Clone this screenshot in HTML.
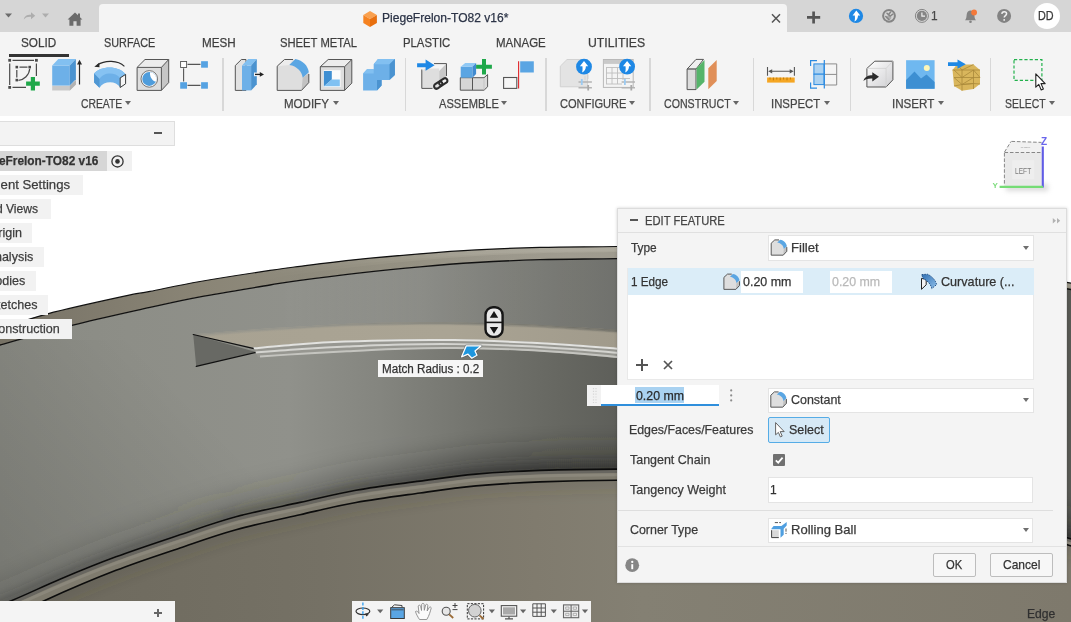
<!DOCTYPE html>
<html lang="en">
<head>
<meta charset="utf-8">
<title>PiegeFrelon-TO82 v16</title>
<style>
*{box-sizing:border-box;margin:0;padding:0}
html,body{width:1071px;height:622px;overflow:hidden;background:#fff}
body{position:relative;font-family:"Liberation Sans",sans-serif;font-size:13px;color:#3c3c3c}
.abs{position:absolute}
#model{position:absolute;left:0;top:0}
#titlebar{position:absolute;left:0;top:0;width:1071px;height:32px;background:#d6d6d6}
#doctab{position:absolute;left:99px;top:4px;width:688px;height:28px;background:#f4f4f4;border-radius:4px 4px 0 0}
#toolbar{position:absolute;left:0;top:32px;width:1071px;height:84px;background:#f4f4f4}
.t{position:absolute;white-space:nowrap;line-height:1;transform-origin:0 50%;-webkit-text-stroke:0.25px currentColor}
.tab{font-size:12.3px;color:#3a3a3a;top:37px}
.grp{font-size:12.3px;color:#444;top:98px}
.sep{position:absolute;top:58px;width:1.6px;height:53px;background:#d8d8d8}
.lbl{position:absolute;left:0;height:20px;background:#f2f2f2;font-size:13.4px;color:#3c3c3c;line-height:20px;white-space:nowrap;overflow:hidden}
#panel{position:absolute;left:617px;top:208px;width:450px;height:375px;background:#f4f4f4;border:1px solid #dcdcdc;box-shadow:0 0 3px rgba(0,0,0,.18)}
.field{position:absolute;background:#fff;border:1px solid #e4e4e4;height:26px}
.pl{position:absolute;font-size:13.4px;color:#3c3c3c;white-space:nowrap;line-height:1}
.btn{position:absolute;height:24px;border:1px solid #bdbdbd;background:#f7f7f7;border-radius:2px;font-size:13.4px;text-align:center;line-height:22px;color:#333}
.dd{position:absolute;width:0;height:0;border-left:3.5px solid transparent;border-right:3.5px solid transparent;border-top:4px solid #666}
</style>
</head>
<body>
<svg id="model" width="1071" height="622" viewBox="0 0 1071 622">
<defs>
<linearGradient id="gw" gradientUnits="userSpaceOnUse" x1="0" y1="0" x2="1071" y2="0">
<stop offset="0" stop-color="#898a83"/><stop offset="0.12" stop-color="#8d8e87"/><stop offset="0.27" stop-color="#90918b"/><stop offset="0.355" stop-color="#84857f"/><stop offset="0.448" stop-color="#72736d"/><stop offset="0.523" stop-color="#666761"/><stop offset="0.576" stop-color="#5e5f5a"/><stop offset="1" stop-color="#585954"/>
</linearGradient>
<linearGradient id="gs" gradientUnits="userSpaceOnUse" x1="0" y1="0" x2="1071" y2="0"><stop offset="0" stop-color="#2e2e2a" stop-opacity="0.14"/><stop offset="0.3" stop-color="#2e2e2a" stop-opacity="0.26"/><stop offset="0.5" stop-color="#2a2a26" stop-opacity="0.42"/><stop offset="1" stop-color="#2a2a26" stop-opacity="0.42"/></linearGradient>
<linearGradient id="go" gradientUnits="userSpaceOnUse" x1="280" y1="0" x2="420" y2="0"><stop offset="0" stop-color="#fff" stop-opacity="0"/><stop offset="1" stop-color="#fff" stop-opacity="0.115"/></linearGradient>
<linearGradient id="grd" gradientUnits="userSpaceOnUse" x1="250" y1="0" x2="480" y2="0"><stop offset="0" stop-color="#000" stop-opacity="0"/><stop offset="1" stop-color="#000" stop-opacity="0.06"/></linearGradient>
<linearGradient id="grl" gradientUnits="userSpaceOnUse" x1="250" y1="0" x2="480" y2="0"><stop offset="0" stop-color="#fff" stop-opacity="0"/><stop offset="1" stop-color="#fff" stop-opacity="0.05"/></linearGradient>
<linearGradient id="gs2" gradientUnits="userSpaceOnUse" x1="0" y1="0" x2="1071" y2="0"><stop offset="0" stop-color="#2e2e2a" stop-opacity="0.3"/><stop offset="0.25" stop-color="#2e2e2a" stop-opacity="0.4"/><stop offset="0.5" stop-color="#2a2a26" stop-opacity="0.55"/><stop offset="1" stop-color="#2a2a26" stop-opacity="0.55"/></linearGradient>
<linearGradient id="gdl" gradientUnits="userSpaceOnUse" x1="210" y1="420" x2="20" y2="600"><stop offset="0" stop-color="#000" stop-opacity="0"/><stop offset="1" stop-color="#000" stop-opacity="0.13"/></linearGradient>
<linearGradient id="gf" gradientUnits="userSpaceOnUse" x1="0" y1="0" x2="1071" y2="0">
<stop offset="0" stop-color="#6c685c"/><stop offset="0.3" stop-color="#757165"/><stop offset="0.5" stop-color="#807b6e"/><stop offset="0.6" stop-color="#848073"/><stop offset="1" stop-color="#7e796c"/>
</linearGradient>
<linearGradient id="gr" gradientUnits="userSpaceOnUse" x1="0" y1="0" x2="1071" y2="0">
<stop offset="0" stop-color="#777265"/><stop offset="0.05" stop-color="#7c776a"/><stop offset="0.19" stop-color="#8a8576"/><stop offset="0.28" stop-color="#8f8b7d"/><stop offset="0.39" stop-color="#9c9889"/><stop offset="0.445" stop-color="#a39f92"/><stop offset="0.53" stop-color="#aaa699"/><stop offset="1" stop-color="#9d9989"/>
</linearGradient>
<linearGradient id="gl" gradientUnits="userSpaceOnUse" x1="190" y1="0" x2="620" y2="0">
<stop offset="0" stop-color="#a8a292"/><stop offset="0.6" stop-color="#aaa494"/><stop offset="1" stop-color="#a09a8b"/>
</linearGradient>
<filter id="b12" x="-10%" y="-50%" width="120%" height="200%"><feGaussianBlur stdDeviation="11"/></filter>
<filter id="b4" x="-10%" y="-50%" width="120%" height="200%"><feGaussianBlur stdDeviation="4"/></filter>
<filter id="b2" x="-10%" y="-100%" width="120%" height="300%"><feGaussianBlur stdDeviation="1.8"/></filter>
<filter id="b6" x="-10%" y="-50%" width="120%" height="200%"><feGaussianBlur stdDeviation="7"/></filter>
<clipPath id="cw"><path d="M-30.0 354.0 C-25.0 352.5 -17.0 349.8 0.0 345.0 C17.0 340.2 46.9 331.7 71.9 325.4 C96.9 319.1 128.7 312.2 150.0 307.4 C171.3 302.6 180.0 300.5 200.0 296.8 C220.0 293.1 253.3 287.8 270.0 285.0 C286.7 282.2 285.7 282.2 300.0 280.3 C314.3 278.4 336.0 275.6 356.0 273.3 C376.0 271.1 400.0 268.6 420.0 266.8 C440.0 265.0 456.0 263.7 476.0 262.5 C496.0 261.3 516.5 260.3 540.0 259.7 C563.5 259.1 580.3 259.1 617.0 258.6 C653.7 258.2 712.8 256.3 760.0 257.0 C807.2 257.7 848.7 257.7 900.0 263.0 C951.3 268.3 1034.7 283.5 1068.0 289.0 C1101.3 294.5 1094.7 294.8 1100.0 296.0 L1100 700 L-30 700 Z"/></clipPath>
<clipPath id="cf"><path d="M-30.0 636.0 C-17.5 630.1 20.5 611.4 44.8 600.4 C69.1 589.4 93.5 579.0 116.0 570.3 C138.5 561.5 160.0 554.7 180.0 547.9 C200.0 541.1 216.0 535.2 236.0 529.7 C256.0 524.2 280.0 519.2 300.0 514.7 C320.0 510.2 336.0 506.1 356.0 502.5 C376.0 498.9 400.0 495.8 420.0 493.0 C440.0 490.2 456.0 487.8 476.0 485.9 C496.0 484.0 516.5 482.8 540.0 481.9 C563.5 481.0 580.3 480.4 617.0 480.3 C653.7 480.2 712.8 477.6 760.0 481.0 C807.2 484.4 848.7 490.3 900.0 501.0 C951.3 511.7 1034.7 536.0 1068.0 545.0 C1101.3 554.0 1094.7 553.3 1100.0 555.0 L1100 700 L-30 700 Z"/></clipPath>
</defs>
<path d="M-30.0 354.0 C-25.0 352.5 -17.0 349.8 0.0 345.0 C17.0 340.2 46.9 331.7 71.9 325.4 C96.9 319.1 128.7 312.2 150.0 307.4 C171.3 302.6 180.0 300.5 200.0 296.8 C220.0 293.1 253.3 287.8 270.0 285.0 C286.7 282.2 285.7 282.2 300.0 280.3 C314.3 278.4 336.0 275.6 356.0 273.3 C376.0 271.1 400.0 268.6 420.0 266.8 C440.0 265.0 456.0 263.7 476.0 262.5 C496.0 261.3 516.5 260.3 540.0 259.7 C563.5 259.1 580.3 259.1 617.0 258.6 C653.7 258.2 712.8 256.3 760.0 257.0 C807.2 257.7 848.7 257.7 900.0 263.0 C951.3 268.3 1034.7 283.5 1068.0 289.0 C1101.3 294.5 1094.7 294.8 1100.0 296.0 L1100 640 L-30 640 Z" fill="url(#gw)"/>
<rect x="0" y="340" width="330" height="282" fill="url(#gdl)" clip-path="url(#cw)"/>
<g clip-path="url(#cw)"><path d="M-30.0 610.0 C-23.0 607.4 -3.0 600.5 12.0 594.4 C27.0 588.3 42.7 580.5 60.0 573.2 C77.3 565.9 96.0 558.2 116.0 550.8 C136.0 543.4 160.0 535.5 180.0 528.8 C200.0 522.1 216.0 516.2 236.0 510.8 C256.0 505.4 280.0 500.8 300.0 496.4 C320.0 492.0 336.0 487.8 356.0 484.2 C376.0 480.6 400.0 477.8 420.0 475.1 C440.0 472.4 456.0 469.9 476.0 468.1 C496.0 466.3 516.5 465.2 540.0 464.4 C563.5 463.6 580.3 463.2 617.0 463.1 C653.7 463.0 712.8 460.2 760.0 464.0 C807.2 467.8 848.7 474.7 900.0 486.0 C951.3 497.3 1034.7 522.7 1068.0 532.0 C1101.3 541.3 1094.7 540.3 1100.0 542.0" fill="none" stroke="url(#gs)" stroke-width="32" filter="url(#b12)"/><path d="M-30.0 615.0 C-23.0 612.4 -3.0 605.5 12.0 599.4 C27.0 593.3 42.7 585.5 60.0 578.2 C77.3 570.9 96.0 563.2 116.0 555.8 C136.0 548.4 160.0 540.5 180.0 533.8 C200.0 527.1 216.0 521.2 236.0 515.8 C256.0 510.4 280.0 505.8 300.0 501.4 C320.0 497.0 336.0 492.8 356.0 489.2 C376.0 485.6 400.0 482.8 420.0 480.1 C440.0 477.4 456.0 474.9 476.0 473.1 C496.0 471.3 516.5 470.2 540.0 469.4 C563.5 468.6 580.3 468.2 617.0 468.1 C653.7 468.0 712.8 465.2 760.0 469.0 C807.2 472.8 848.7 479.7 900.0 491.0 C951.3 502.3 1034.7 527.7 1068.0 537.0 C1101.3 546.3 1094.7 545.3 1100.0 547.0" fill="none" stroke="url(#gs2)" stroke-width="12" filter="url(#b4)"/></g>
<path d="M193.2 334.5 C202.7 333.7 232.2 331.1 250.0 329.8 C267.8 328.5 284.2 327.6 300.0 326.6 C315.8 325.6 328.3 324.6 345.0 323.9 C361.7 323.2 381.8 322.9 400.0 322.6 C418.2 322.4 434.0 322.2 454.0 322.4 C474.0 322.6 499.0 323.1 520.0 324.0 C541.0 324.9 563.8 326.5 580.0 327.5 C596.2 328.5 600.3 328.6 617.0 330.0 C633.7 331.4 669.5 335.0 680.0 336.0 L680 336 L680 250 L193 250 Z" fill="url(#go)" clip-path="url(#cw)"/>
<path d="M-30.0 339.0 C-25.0 337.3 -12.9 333.2 0.0 329.0 C12.9 324.8 27.1 319.2 47.6 313.8 C68.1 308.4 106.1 300.1 123.2 296.4 C140.3 292.7 137.2 293.9 150.0 291.4 C162.8 288.9 180.0 285.0 200.0 281.5 C220.0 278.0 253.3 272.9 270.0 270.4 C286.7 267.9 285.7 268.1 300.0 266.3 C314.3 264.5 336.0 261.7 356.0 259.6 C376.0 257.5 400.0 255.4 420.0 253.8 C440.0 252.2 456.0 251.0 476.0 249.9 C496.0 248.8 516.5 248.0 540.0 247.4 C563.5 246.8 580.3 246.9 617.0 246.5 C653.7 246.1 712.8 244.1 760.0 245.0 C807.2 245.9 848.7 245.7 900.0 252.0 C951.3 258.3 1034.7 276.3 1068.0 282.6 C1101.3 288.9 1094.7 288.8 1100.0 290.0 L1100.0 296.0 C1094.7 294.8 1101.3 294.5 1068.0 289.0 C1034.7 283.5 951.3 268.3 900.0 263.0 C848.7 257.7 807.2 257.7 760.0 257.0 C712.8 256.3 653.7 258.2 617.0 258.6 C580.3 259.1 563.5 259.1 540.0 259.7 C516.5 260.3 496.0 261.3 476.0 262.5 C456.0 263.7 440.0 265.0 420.0 266.8 C400.0 268.6 376.0 271.1 356.0 273.3 C336.0 275.6 314.3 278.4 300.0 280.3 C285.7 282.2 286.7 282.2 270.0 285.0 C253.3 287.8 220.0 293.1 200.0 296.8 C180.0 300.5 171.3 302.6 150.0 307.4 C128.7 312.2 96.9 319.1 71.9 325.4 C46.9 331.7 17.0 340.2 0.0 345.0 C-17.0 349.8 -25.0 352.5 -30.0 354.0 Z" fill="url(#gr)"/>
<path d="M-30.0 347.5 C-25.0 346.0 -17.0 343.3 0.0 338.5 C17.0 333.7 46.9 325.2 71.9 318.9 C96.9 312.6 128.7 305.7 150.0 300.9 C171.3 296.1 180.0 294.0 200.0 290.3 C220.0 286.6 253.3 281.2 270.0 278.5 C286.7 275.8 285.7 275.8 300.0 273.8 C314.3 271.9 336.0 269.1 356.0 266.8 C376.0 264.6 400.0 262.1 420.0 260.3 C440.0 258.5 456.0 257.2 476.0 256.0 C496.0 254.8 516.5 253.8 540.0 253.2 C563.5 252.5 580.3 252.6 617.0 252.1 C653.7 251.7 712.8 249.8 760.0 250.5 C807.2 251.2 848.7 251.2 900.0 256.5 C951.3 261.8 1034.7 277.0 1068.0 282.5 C1101.3 288.0 1094.7 288.3 1100.0 289.5 L1100.0 296.0 C1094.7 294.8 1101.3 294.5 1068.0 289.0 C1034.7 283.5 951.3 268.3 900.0 263.0 C848.7 257.7 807.2 257.7 760.0 257.0 C712.8 256.3 653.7 258.2 617.0 258.6 C580.3 259.1 563.5 259.1 540.0 259.7 C516.5 260.3 496.0 261.3 476.0 262.5 C456.0 263.7 440.0 265.0 420.0 266.8 C400.0 268.6 376.0 271.1 356.0 273.3 C336.0 275.6 314.3 278.4 300.0 280.3 C285.7 282.2 286.7 282.2 270.0 285.0 C253.3 287.8 220.0 293.1 200.0 296.8 C180.0 300.5 171.3 302.6 150.0 307.4 C128.7 312.2 96.9 319.1 71.9 325.4 C46.9 331.7 17.0 340.2 0.0 345.0 C-17.0 349.8 -25.0 352.5 -30.0 354.0 Z" fill="url(#grd)"/>
<path d="M-30.0 339.0 C-25.0 337.3 -12.9 333.2 0.0 329.0 C12.9 324.8 27.1 319.2 47.6 313.8 C68.1 308.4 106.1 300.1 123.2 296.4 C140.3 292.7 137.2 293.9 150.0 291.4 C162.8 288.9 180.0 285.0 200.0 281.5 C220.0 278.0 253.3 272.9 270.0 270.4 C286.7 267.9 285.7 268.1 300.0 266.3 C314.3 264.5 336.0 261.7 356.0 259.6 C376.0 257.5 400.0 255.4 420.0 253.8 C440.0 252.2 456.0 251.0 476.0 249.9 C496.0 248.8 516.5 248.0 540.0 247.4 C563.5 246.8 580.3 246.9 617.0 246.5 C653.7 246.1 712.8 244.1 760.0 245.0 C807.2 245.9 848.7 245.7 900.0 252.0 C951.3 258.3 1034.7 276.3 1068.0 282.6 C1101.3 288.9 1094.7 288.8 1100.0 290.0 L1100.0 294.5 C1094.7 293.3 1101.3 293.4 1068.0 287.1 C1034.7 280.8 951.3 262.8 900.0 256.5 C848.7 250.2 807.2 250.4 760.0 249.5 C712.8 248.6 653.7 250.6 617.0 251.0 C580.3 251.4 563.5 251.3 540.0 251.9 C516.5 252.5 496.0 253.3 476.0 254.4 C456.0 255.5 440.0 256.7 420.0 258.3 C400.0 259.9 376.0 262.0 356.0 264.1 C336.0 266.2 314.3 269.0 300.0 270.8 C285.7 272.6 286.7 272.4 270.0 274.9 C253.3 277.4 220.0 282.5 200.0 286.0 C180.0 289.5 162.8 293.4 150.0 295.9 C137.2 298.4 140.3 297.2 123.2 300.9 C106.1 304.6 68.1 312.9 47.6 318.3 C27.1 323.7 12.9 329.3 0.0 333.5 C-12.9 337.7 -25.0 341.8 -30.0 343.5 Z" fill="url(#grl)"/>
<path d="M-30.0 339.0 C-25.0 337.3 -12.9 333.2 0.0 329.0 C12.9 324.8 27.1 319.2 47.6 313.8 C68.1 308.4 106.1 300.1 123.2 296.4 C140.3 292.7 137.2 293.9 150.0 291.4 C162.8 288.9 180.0 285.0 200.0 281.5 C220.0 278.0 253.3 272.9 270.0 270.4 C286.7 267.9 285.7 268.1 300.0 266.3 C314.3 264.5 336.0 261.7 356.0 259.6 C376.0 257.5 400.0 255.4 420.0 253.8 C440.0 252.2 456.0 251.0 476.0 249.9 C496.0 248.8 516.5 248.0 540.0 247.4 C563.5 246.8 580.3 246.9 617.0 246.5 C653.7 246.1 712.8 244.1 760.0 245.0 C807.2 245.9 848.7 245.7 900.0 252.0 C951.3 258.3 1034.7 276.3 1068.0 282.6 C1101.3 288.9 1094.7 288.8 1100.0 290.0" fill="none" stroke="#111" stroke-width="1.2"/>
<path d="M-30.0 354.0 C-25.0 352.5 -17.0 349.8 0.0 345.0 C17.0 340.2 46.9 331.7 71.9 325.4 C96.9 319.1 128.7 312.2 150.0 307.4 C171.3 302.6 180.0 300.5 200.0 296.8 C220.0 293.1 253.3 287.8 270.0 285.0 C286.7 282.2 285.7 282.2 300.0 280.3 C314.3 278.4 336.0 275.6 356.0 273.3 C376.0 271.1 400.0 268.6 420.0 266.8 C440.0 265.0 456.0 263.7 476.0 262.5 C496.0 261.3 516.5 260.3 540.0 259.7 C563.5 259.1 580.3 259.1 617.0 258.6 C653.7 258.2 712.8 256.3 760.0 257.0 C807.2 257.7 848.7 257.7 900.0 263.0 C951.3 268.3 1034.7 283.5 1068.0 289.0 C1101.3 294.5 1094.7 294.8 1100.0 296.0" fill="none" stroke="#111" stroke-width="1.3"/>
<path d="M-30.0 636.0 C-17.5 630.1 20.5 611.4 44.8 600.4 C69.1 589.4 93.5 579.0 116.0 570.3 C138.5 561.5 160.0 554.7 180.0 547.9 C200.0 541.1 216.0 535.2 236.0 529.7 C256.0 524.2 280.0 519.2 300.0 514.7 C320.0 510.2 336.0 506.1 356.0 502.5 C376.0 498.9 400.0 495.8 420.0 493.0 C440.0 490.2 456.0 487.8 476.0 485.9 C496.0 484.0 516.5 482.8 540.0 481.9 C563.5 481.0 580.3 480.4 617.0 480.3 C653.7 480.2 712.8 477.6 760.0 481.0 C807.2 484.4 848.7 490.3 900.0 501.0 C951.3 511.7 1034.7 536.0 1068.0 545.0 C1101.3 554.0 1094.7 553.3 1100.0 555.0 L1100 640 L-30 640 Z" fill="url(#gf)"/>
<g clip-path="url(#cf)"><path d="M-30.0 638.0 C-17.5 632.1 20.5 613.4 44.8 602.4 C69.1 591.4 93.5 581.0 116.0 572.3 C138.5 563.5 160.0 556.7 180.0 549.9 C200.0 543.1 216.0 537.2 236.0 531.7 C256.0 526.2 280.0 521.2 300.0 516.7 C320.0 512.2 336.0 508.1 356.0 504.5 C376.0 500.9 400.0 497.8 420.0 495.0 C440.0 492.2 456.0 489.8 476.0 487.9 C496.0 486.0 516.5 484.8 540.0 483.9 C563.5 483.0 580.3 482.4 617.0 482.3 C653.7 482.2 712.8 479.6 760.0 483.0 C807.2 486.4 848.7 492.3 900.0 503.0 C951.3 513.7 1034.7 538.0 1068.0 547.0 C1101.3 556.0 1094.7 555.3 1100.0 557.0" fill="none" stroke="#3a372f" stroke-opacity="0.16" stroke-width="14" filter="url(#b6)"/></g>
<path d="M-30.0 616.0 C-23.0 613.4 -3.0 606.5 12.0 600.4 C27.0 594.3 42.7 586.5 60.0 579.2 C77.3 571.9 96.0 564.2 116.0 556.8 C136.0 549.4 160.0 541.5 180.0 534.8 C200.0 528.1 216.0 522.2 236.0 516.8 C256.0 511.4 280.0 506.8 300.0 502.4 C320.0 498.0 336.0 493.8 356.0 490.2 C376.0 486.6 400.0 483.8 420.0 481.1 C440.0 478.4 456.0 475.9 476.0 474.1 C496.0 472.3 516.5 471.2 540.0 470.4 C563.5 469.6 580.3 469.2 617.0 469.1 C653.7 469.0 712.8 466.2 760.0 470.0 C807.2 473.8 848.7 480.7 900.0 492.0 C951.3 503.3 1034.7 528.7 1068.0 538.0 C1101.3 547.3 1094.7 546.3 1100.0 548.0 L1100.0 555.0 C1094.7 553.3 1101.3 554.0 1068.0 545.0 C1034.7 536.0 951.3 511.7 900.0 501.0 C848.7 490.3 807.2 484.4 760.0 481.0 C712.8 477.6 653.7 480.2 617.0 480.3 C580.3 480.4 563.5 481.0 540.0 481.9 C516.5 482.8 496.0 484.0 476.0 485.9 C456.0 487.8 440.0 490.2 420.0 493.0 C400.0 495.8 376.0 498.9 356.0 502.5 C336.0 506.1 320.0 510.2 300.0 514.7 C280.0 519.2 256.0 524.2 236.0 529.7 C216.0 535.2 200.0 541.1 180.0 547.9 C160.0 554.7 138.5 561.5 116.0 570.3 C93.5 579.0 69.1 589.4 44.8 600.4 C20.5 611.4 -17.5 630.1 -30.0 636.0 Z" fill="#7f7b6e"/>
<path d="M-29.2 618.2 C-22.2 615.6 -2.2 608.7 12.8 602.6 C27.8 596.5 43.5 588.7 60.8 581.4 C78.1 574.1 96.8 566.4 116.8 559.0 C136.8 551.6 160.8 543.7 180.8 537.0 C200.8 530.3 216.8 524.4 236.8 519.0 C256.8 513.6 280.8 509.0 300.8 504.6 C320.8 500.2 336.8 495.9 356.8 492.4 C376.8 488.8 400.8 486.0 420.8 483.3 C440.8 480.6 456.8 478.1 476.8 476.3 C496.8 474.5 517.3 473.4 540.8 472.6 C564.3 471.8 581.1 471.4 617.8 471.3 C654.5 471.2 713.6 468.4 760.8 472.2 C808.0 476.0 849.5 482.9 900.8 494.2 C952.1 505.5 1035.5 530.9 1068.8 540.2 C1102.1 549.5 1095.5 548.5 1100.8 550.2" fill="none" stroke="#686660" stroke-width="3.2"/>
<path d="M-28.2 621.6 C-21.2 619.0 -1.2 612.1 13.8 606.0 C28.8 599.9 44.5 592.1 61.8 584.8 C79.1 577.5 97.8 569.8 117.8 562.4 C137.8 555.0 161.8 547.1 181.8 540.4 C201.8 533.7 217.8 527.8 237.8 522.4 C257.8 517.0 281.8 512.4 301.8 508.0 C321.8 503.6 337.8 499.4 357.8 495.8 C377.8 492.2 401.8 489.4 421.8 486.7 C441.8 484.0 457.8 481.5 477.8 479.7 C497.8 477.9 518.3 476.8 541.8 476.0 C565.3 475.2 582.1 474.8 618.8 474.7 C655.5 474.6 714.6 471.8 761.8 475.6 C809.0 479.4 850.5 486.3 901.8 497.6 C953.1 508.9 1036.5 534.3 1069.8 543.6 C1103.1 552.9 1096.5 551.9 1101.8 553.6" fill="none" stroke="#8b877b" stroke-width="3"/>
<path d="M-30.0 616.0 C-23.0 613.4 -3.0 606.5 12.0 600.4 C27.0 594.3 42.7 586.5 60.0 579.2 C77.3 571.9 96.0 564.2 116.0 556.8 C136.0 549.4 160.0 541.5 180.0 534.8 C200.0 528.1 216.0 522.2 236.0 516.8 C256.0 511.4 280.0 506.8 300.0 502.4 C320.0 498.0 336.0 493.8 356.0 490.2 C376.0 486.6 400.0 483.8 420.0 481.1 C440.0 478.4 456.0 475.9 476.0 474.1 C496.0 472.3 516.5 471.2 540.0 470.4 C563.5 469.6 580.3 469.2 617.0 469.1 C653.7 469.0 712.8 466.2 760.0 470.0 C807.2 473.8 848.7 480.7 900.0 492.0 C951.3 503.3 1034.7 528.7 1068.0 538.0 C1101.3 547.3 1094.7 546.3 1100.0 548.0" fill="none" stroke="#0c0c0c" stroke-width="1.6"/>
<path d="M-30.0 636.0 C-17.5 630.1 20.5 611.4 44.8 600.4 C69.1 589.4 93.5 579.0 116.0 570.3 C138.5 561.5 160.0 554.7 180.0 547.9 C200.0 541.1 216.0 535.2 236.0 529.7 C256.0 524.2 280.0 519.2 300.0 514.7 C320.0 510.2 336.0 506.1 356.0 502.5 C376.0 498.9 400.0 495.8 420.0 493.0 C440.0 490.2 456.0 487.8 476.0 485.9 C496.0 484.0 516.5 482.8 540.0 481.9 C563.5 481.0 580.3 480.4 617.0 480.3 C653.7 480.2 712.8 477.6 760.0 481.0 C807.2 484.4 848.7 490.3 900.0 501.0 C951.3 511.7 1034.7 536.0 1068.0 545.0 C1101.3 554.0 1094.7 553.3 1100.0 555.0" fill="none" stroke="#0c0c0c" stroke-width="1.6"/>
<path d="M193.2 334.5 C202.7 333.7 232.2 331.1 250.0 329.8 C267.8 328.5 284.2 327.6 300.0 326.6 C315.8 325.6 328.3 324.6 345.0 323.9 C361.7 323.2 381.8 322.9 400.0 322.6 C418.2 322.4 434.0 322.2 454.0 322.4 C474.0 322.6 499.0 323.1 520.0 324.0 C541.0 324.9 563.8 326.5 580.0 327.5 C596.2 328.5 600.3 328.6 617.0 330.0 C633.7 331.4 669.5 335.0 680.0 336.0 L680.0 354.0 C669.5 353.0 633.7 349.5 617.0 348.0 C600.3 346.5 596.2 346.1 580.0 345.0 C563.8 343.9 541.0 342.4 520.0 341.5 C499.0 340.6 474.0 339.7 454.0 339.4 C434.0 339.1 418.2 339.2 400.0 339.5 C381.8 339.8 361.7 340.2 345.0 340.9 C328.3 341.6 315.2 342.4 300.0 343.5 C284.8 344.6 261.4 346.9 253.7 347.6 Z" fill="url(#gl)"/>
<path d="M193.2 334.5 C202.7 333.7 232.2 331.1 250.0 329.8 C267.8 328.5 284.2 327.6 300.0 326.6 C315.8 325.6 328.3 324.6 345.0 323.9 C361.7 323.2 381.8 322.9 400.0 322.6 C418.2 322.4 434.0 322.2 454.0 322.4 C474.0 322.6 499.0 323.1 520.0 324.0 C541.0 324.9 563.8 326.5 580.0 327.5 C596.2 328.5 610.8 329.6 617.0 330.0 L620.3 331.3 C613.9 330.8 598.1 329.6 581.9 328.6 C565.7 327.6 543.9 326.0 523.1 325.1 C502.4 324.2 477.5 323.7 457.5 323.4 C437.4 323.1 421.1 323.3 402.8 323.5 C384.6 323.7 364.6 324.1 347.9 324.7 C331.1 325.4 318.2 326.4 302.4 327.4 C286.5 328.3 270.3 329.2 252.6 330.5 C235.0 331.8 205.8 334.4 196.4 335.2 Z" fill="url(#gw)" fill-opacity="0.79"/>
<path d="M195.8 335.1 C205.2 334.3 234.4 331.7 252.1 330.4 C269.8 329.1 286.0 328.2 301.9 327.2 C317.8 326.2 330.6 325.2 347.3 324.6 C364.1 323.9 384.1 323.5 402.3 323.3 C420.5 323.1 436.8 322.9 456.8 323.2 C476.8 323.5 501.8 324.0 522.5 324.9 C543.3 325.8 565.4 327.3 581.6 328.4 C597.8 329.4 613.3 330.6 619.7 331.0 L623.0 332.3 C616.4 331.8 599.7 330.5 583.5 329.4 C567.3 328.4 546.2 326.9 525.7 326.0 C505.2 325.1 480.4 324.5 460.3 324.2 C440.2 323.9 423.5 324.0 405.1 324.2 C386.8 324.4 367.0 324.8 350.2 325.4 C333.4 326.0 320.2 327.0 304.3 328.0 C288.4 328.9 272.3 329.8 254.8 331.1 C237.2 332.4 208.2 335.0 198.9 335.7 Z" fill="url(#gw)" fill-opacity="0.56"/>
<path d="M198.3 335.6 C207.7 334.8 236.7 332.3 254.2 331.0 C271.8 329.7 287.9 328.8 303.8 327.8 C319.7 326.9 332.9 325.9 349.7 325.2 C366.5 324.6 386.3 324.2 404.6 324.0 C422.9 323.8 439.5 323.7 459.6 324.0 C479.7 324.3 504.5 324.9 525.1 325.8 C545.7 326.7 566.9 328.2 583.1 329.2 C599.4 330.3 615.8 331.6 622.4 332.0 L625.7 333.3 C618.9 332.8 601.3 331.4 585.1 330.3 C568.9 329.2 548.6 327.8 528.2 326.9 C507.9 326.0 483.2 325.4 463.1 325.0 C442.9 324.7 425.8 324.7 407.4 324.9 C389.0 325.1 369.4 325.4 352.6 326.0 C335.7 326.7 322.1 327.6 306.2 328.6 C290.2 329.5 274.3 330.4 256.9 331.7 C239.4 333.0 210.7 335.5 201.5 336.3 Z" fill="url(#gw)" fill-opacity="0.34"/>
<path d="M200.9 336.2 C210.2 335.4 238.9 332.8 256.4 331.5 C273.8 330.3 289.8 329.4 305.7 328.4 C321.7 327.5 335.2 326.5 352.0 325.9 C368.9 325.3 388.5 324.9 406.9 324.7 C425.3 324.6 442.3 324.5 462.4 324.8 C482.5 325.2 507.3 325.8 527.6 326.7 C548.0 327.6 568.5 329.0 584.7 330.1 C600.9 331.2 618.3 332.6 625.0 333.1 L628.3 334.3 C621.4 333.8 602.9 332.3 586.7 331.2 C570.4 330.1 550.9 328.7 530.8 327.8 C510.7 326.9 486.1 326.2 465.9 325.8 C445.7 325.5 428.2 325.5 409.7 325.6 C391.2 325.8 371.8 326.1 354.9 326.7 C338.0 327.3 324.1 328.2 308.1 329.2 C292.1 330.1 276.3 331.0 259.0 332.3 C241.7 333.5 213.2 336.1 204.1 336.9 Z" fill="url(#gw)" fill-opacity="0.11"/>
<path d="M193.2 334.5 L256.7 352.1 L196.2 366.3 Z" fill="#686964"/><path d="M193.2 334.5 L254 348.6 M196.2 366.3 L256.7 352.3" fill="none" stroke="#111" stroke-width="1.2" stroke-linecap="round"/>
<path d="M253.7 347.6 C261.4 346.9 284.8 344.6 300.0 343.5 C315.2 342.4 328.3 341.6 345.0 340.9 C361.7 340.2 381.8 339.8 400.0 339.5 C418.2 339.2 434.0 339.1 454.0 339.4 C474.0 339.7 499.0 340.6 520.0 341.5 C541.0 342.4 563.8 343.9 580.0 345.0 C596.2 346.1 600.3 346.5 617.0 348.0 C633.7 349.5 669.5 353.0 680.0 354.0 L680.0 364.0 C669.5 363.0 633.7 359.6 617.0 358.0 C600.3 356.4 596.2 355.8 580.0 354.5 C563.8 353.2 541.0 351.4 520.0 350.5 C499.0 349.6 474.0 349.0 454.0 348.8 C434.0 348.6 418.2 348.9 400.0 349.5 C381.8 350.1 361.7 351.3 345.0 352.1 C328.3 352.9 314.5 353.6 300.0 354.5 C285.5 355.4 265.0 356.8 258.0 357.3 Z" fill="#979791"/>
<path d="M253.7 348.3 C261.4 347.6 284.8 345.3 300.0 344.2 C315.2 343.1 328.3 342.3 345.0 341.6 C361.7 340.9 381.8 340.4 400.0 340.2 C418.2 339.9 434.0 339.8 454.0 340.1 C474.0 340.4 499.0 341.3 520.0 342.2 C541.0 343.1 563.8 344.6 580.0 345.7 C596.2 346.8 600.3 347.2 617.0 348.7 C633.7 350.2 669.5 353.7 680.0 354.7" fill="none" stroke="#e2e2df" stroke-width="2"/>
<path d="M255.7 352.5 C263.4 351.9 286.8 350.0 302.0 349.0 C317.2 348.0 330.3 347.2 347.0 346.5 C363.7 345.8 383.8 344.9 402.0 344.5 C420.2 344.1 436.0 343.9 456.0 344.1 C476.0 344.4 501.0 345.1 522.0 346.0 C543.0 346.9 565.8 348.6 582.0 349.8 C598.2 350.9 602.3 351.5 619.0 353.0 C635.7 354.5 671.5 358.0 682.0 359.0" fill="none" stroke="#d4d4d0" stroke-width="1.9"/>
<path d="M260.0 356.5 C267.0 356.0 287.5 354.6 302.0 353.7 C316.5 352.8 330.3 352.1 347.0 351.3 C363.7 350.5 383.8 349.2 402.0 348.7 C420.2 348.1 436.0 347.8 456.0 348.0 C476.0 348.2 501.0 348.8 522.0 349.7 C543.0 350.6 565.8 352.4 582.0 353.7 C598.2 354.9 602.3 355.6 619.0 357.2 C635.7 358.8 671.5 362.2 682.0 363.2" fill="none" stroke="#c4c4bf" stroke-width="1.9"/>
</svg>

<!-- title bar -->
<div id="titlebar"></div>
<div id="doctab"></div>
<div id="toolbar"></div>

<svg class="abs" style="left:0;top:0" width="1071" height="32" viewBox="0 0 1071 32">
<path d="M5 13.4H12L8.5 17.6z" fill="#6c6c6c"/>
<path d="M23.8 19.5C24.5 15.8 27.5 14.6 31 14.8V12.3L35.2 15.8L31 19.2V16.8C28 16.6 25.5 17.2 23.8 19.5z" fill="#adadad"/>
<path d="M42 13.4H49L45.5 17.6z" fill="#adadad"/>
<path d="M67.6 19.4L75 12.6L78 15.3V13.4H80V17.2L82.4 19.4H80.6V25.7H76.6V21.3H73.4V25.7H69.4V19.4z" fill="#6b6b6b"/>
<!-- cube -->
<path d="M363.3 15L370 11L376.9 15L370 19z" fill="#f9a04e"/>
<path d="M363.3 15L370 19V27L363.3 23z" fill="#f58220"/>
<path d="M370 19L376.9 15V23L370 27z" fill="#e86f0e"/>
<!-- close -->
<path d="M772 14.2L780 22.4 M780 14.2L772 22.4" stroke="#555" stroke-width="1.5" fill="none"/>
<!-- plus -->
<path d="M807 17.4H820.2 M813.6 11.4V23.4" stroke="#555" stroke-width="2.7" fill="none"/>
<!-- blue up -->
<circle cx="856" cy="15.9" r="7.1" fill="#1e88e5"/>
<path d="M856.3 10.6L860.2 15.4H858C858 18 856.9 20.2 854.4 21.4C855.2 19.4 855 17.2 854.8 15.4H852.6z" fill="#fff"/>
<!-- job status -->
<circle cx="889" cy="15.8" r="5.9" fill="#d4d4d4" stroke="#848484" stroke-width="2"/>
<path d="M884 20.5L883 23.5L886.5 22z" fill="#d6d6d6"/>
<path d="M887 13.2L889.6 15.6 M890.6 12L888.6 14.6 M892.8 14.2L890.4 16 M885.8 16.5L889 19.6" stroke="#848484" stroke-width="1.5" fill="none" stroke-linecap="round"/>
<path d="M886.2 17C886.5 15.5 889.5 14.8 891 16.2C892 17.5 891 19.6 889 19.8C887.5 19.8 886.2 18.6 886.2 17z" fill="#8a8a8a" opacity="0.55"/>
<!-- clock -->
<circle cx="921.9" cy="15.9" r="6.5" fill="none" stroke="#7a7a7a" stroke-width="0.9"/>
<circle cx="921.9" cy="15.9" r="5.1" fill="#858585"/>
<path d="M921.9 12.6V16.2H925" stroke="#f0f0f0" stroke-width="1.2" fill="none"/>
<!-- bell -->
<path d="M965 20.2C966.6 18.8 966.4 16.5 966.7 14.6C967 12 968.6 10.6 970.5 10.6C972.4 10.6 974 12 974.3 14.6C974.6 16.5 974.4 18.8 976 20.2z" fill="#838383"/>
<circle cx="970.5" cy="21.7" r="1.3" fill="#838383"/>
<circle cx="974.1" cy="12.5" r="2.9" fill="#f4793b"/>
<!-- help -->
<circle cx="1004.1" cy="15.9" r="7" fill="#838383"/>
<path d="M1001.8 13.9C1001.9 12.4 1003 11.7 1004.2 11.7C1005.6 11.7 1006.6 12.6 1006.6 13.8C1006.6 15.6 1004.2 15.6 1004.2 17.5" fill="none" stroke="#f0f0f0" stroke-width="1.5"/>
<circle cx="1004.2" cy="19.9" r="0.95" fill="#f0f0f0"/>
</svg>

<svg class="abs" style="left:0;top:54px" width="1071" height="44" viewBox="0 54 1071 44">
<defs>
<linearGradient id="gcube" x1="0" y1="0" x2="1" y2="1"><stop offset="0" stop-color="#ededed"/><stop offset="1" stop-color="#cfcfcf"/></linearGradient>
<linearGradient id="gwc" x1="0" y1="0" x2="1" y2="1"><stop offset="0" stop-color="#ffffff"/><stop offset="1" stop-color="#cfcfd2"/></linearGradient>
</defs>
<!-- 1 create sketch -->
<g stroke="#4a4a4a" stroke-width="1.2" fill="none">
<path d="M12.5 60.3H34 M9.7 63.5V85 M36.4 63.5V76 M12.5 87.4H26"/>
<path d="M19.5 67.1H27.5 M16.8 70V77.5"/>
<path d="M29.7 68.8C29.3 75 24 80 18.5 80.3"/>
</g>
<g fill="#4a4a4a">
<rect x="8.3" y="58.9" width="2.8" height="2.8"/><rect x="35" y="58.9" width="2.8" height="2.8"/><rect x="8.3" y="86" width="2.8" height="2.8"/>
<rect x="15.5" y="65.8" width="2.6" height="2.6"/><rect x="28.4" y="65.8" width="2.6" height="2.6"/><rect x="15.5" y="78.8" width="2.6" height="2.6"/>
</g>
<path d="M30.8 77.1h4.2v4.5h4.8v4.2h-4.8v4.6h-4.2v-4.6h-4.7v-4.2h4.7z" fill="#1fa84a"/>
<!-- 2 extrude -->
<path d="M52.2 85.8L69.8 85.8L75.9 80V84.6L69.8 90.4H52.2z" fill="#c9c9c9"/>
<path d="M69.8 85.8L75.9 80V84.6L69.8 90.4z" fill="#b2b2b2"/>
<path d="M52.2 65.5H69.8V85.6H52.2z" fill="#6db0e8"/>
<path d="M52.2 65.5L58.3 59.1H75.9L69.8 65.5z" fill="#82c0f1"/>
<path d="M69.8 65.5L75.9 59.1V79.2L69.8 85.6z" fill="#4b93d0"/>
<path d="M79.5 84.5V63" stroke="#2a2a2a" stroke-width="1.2" fill="none"/><path d="M79.5 59.8L82 64.5H77z" fill="#2a2a2a"/>
<!-- 3 revolve -->
<path d="M124.4 66.3C118 60.2 105 59.8 97.5 65" stroke="#2a2a2a" stroke-width="1.1" fill="none"/><path d="M94.3 66.8L99.2 62.8L99.5 67.3z" fill="#2a2a2a"/>
<path d="M94.1 73.5C100 66 118 64.5 125.6 74.2V83.8L120.2 87.6C116 80.5 104 80.5 99.5 87.8L94.1 82.5z" fill="#6db0e8"/>
<path d="M94.1 73.5C100 66 118 64.5 125.6 74.2L120.2 77.9C115 71.5 103 72 99.5 79z" fill="#86c2f2"/>
<path d="M94.1 73.5L99.5 79V87.8L94.1 82.5z" fill="#4f97d3"/>
<path d="M120.2 77.9L125.6 74.4V83.8L120.2 87.5z" fill="#f6f6f6" stroke="#3a3a3a" stroke-width="1"/>
<!-- 4 hole -->
<path d="M137.1 67.4L145 59.5H168.7L161.4 67.4z" fill="#ececec"/>
<path d="M161.4 67.4L168.7 59.5V82.6L161.4 90.4z" fill="#c6c6c6"/>
<path d="M137.1 67.4H161.4V90.4H137.1z" fill="#dedede"/>
<path d="M137.1 67.4L145 59.5H168.7V82.6L161.4 90.4H137.1z M137.1 67.4H161.4V90.4 M161.4 67.4L168.7 59.5" fill="none" stroke="#555" stroke-width="1"/>
<circle cx="149.3" cy="78.9" r="8.3" fill="#f4f4f4" stroke="#6a6a6a" stroke-width="0.9"/>
<circle cx="149.3" cy="78.9" r="7" fill="#4f9ddc"/>
<path d="M150 72.2C155 72.5 157 77 156 81.5C153.5 81.5 149.5 78 150 72.2z" fill="#fff"/>
<!-- 5 pattern -->
<path d="M187.5 64.4H200.5 M183.6 68.3V81.5 M187.5 85.4H200.5" stroke="#555" stroke-width="1.1" fill="none"/>
<rect x="180.6" y="61.5" width="6" height="6" fill="#fff" stroke="#555" stroke-width="0.9"/>
<rect x="201.1" y="61.2" width="6.8" height="6.5" fill="#55a2e2"/>
<rect x="180.2" y="82.2" width="6.8" height="6.5" fill="#55a2e2"/>
<rect x="201.1" y="82.2" width="6.8" height="6.5" fill="#55a2e2"/>
<!-- 6 press pull -->
<path d="M235.3 65.5L241.4 59.5H246V90.4H235.3z" fill="#e2e2e2" stroke="#555" stroke-width="1"/>
<path d="M242 65.5H251.1V90.4H242z" fill="#6db0e8"/>
<path d="M242 65.5L248.1 59.1H256.8L251.1 65.5z" fill="#82c0f1"/>
<path d="M251.1 65.5L256.8 59.1V84.3L251.1 90.4z" fill="#4b93d0"/>
<path d="M254 72.6h6.5v3.6H254z" fill="#f3f3f3"/>
<path d="M255 74.4H260.5" stroke="#222" stroke-width="1.3"/><path d="M264 74.4L259.8 72V76.8z" fill="#222"/>
<!-- 7 fillet -->
<path d="M277.2 90.4V66.2L284.5 59.5H293C301 60 307.5 65 308.8 73.5V82.6L301.5 90.4z" fill="#dedede"/>
<path d="M301.5 90.4L308.8 82.6V73.5L302.7 77.7L301.5 90.4z" fill="#c2c2c2"/>
<path d="M277.2 66.2L284.5 59.5H293L289.3 64.9z" fill="#ececec"/>
<path d="M289.3 64.9L295.4 59.1C303 60.5 308 66 308.8 72.2L302.7 77.7C302 71.5 297 66 289.3 64.9z" fill="#5aa6e3"/>
<path d="M277.2 90.4V66.2L284.5 59.5H293 M277.2 90.4H301.5L308.8 82.6V74" fill="none" stroke="#555" stroke-width="1"/>
<!-- 8 shell -->
<path d="M320.3 66.7L328.2 59.5H351.8L344.6 66.7z" fill="#ececec"/>
<path d="M344.6 66.7L351.8 59.5V83.1L344.6 90.4z" fill="#c6c6c6"/>
<path d="M320.3 66.7H344.6V90.4H320.3z" fill="#dedede"/>
<path d="M320.3 66.7L328.2 59.5H351.8V83.1L344.6 90.4H320.3z M320.3 66.7H344.6V90.4 M344.6 66.7L351.8 59.5" fill="none" stroke="#555" stroke-width="1"/>
<rect x="323.6" y="70.2" width="17" height="16.8" fill="#fbfbfb"/>
<path d="M323.9 70.9H331.8V79.5L323.9 86.6z" fill="#3f8fd2"/>
<path d="M331.8 79.5H339.8V86.3H323.9z" fill="#80c1f2"/>
<!-- 9 combine -->
<path d="M363.1 73.4L367 69.2H373.7V64.3L378 59.1H394.9V75L389.5 80.1H381.6V85.4L377 90.4H363.1z" fill="#6db0e8"/>
<path d="M373.7 64.3L378 59.1H394.9L389.5 64.3z M363.1 73.4L367 69.2H373.7V73.4z" fill="#82c0f1"/>
<path d="M389.5 64.3L394.9 59.1V75L389.5 80.1z M381.6 80.1V85.4L377 90.4V80.1z" fill="#4b93d0"/>
<!-- 10 derive link -->
<path d="M421.8 71L425 68.5H439.2V88.4H421.8z" fill="#dedede"/>
<path d="M439.2 71L446.5 63.6V76L439.2 82z" fill="#c8c8c8"/>
<path d="M434 63.6H446.5V76 M421.8 69.5V88.4H432.5" fill="none" stroke="#555" stroke-width="1"/>
<path d="M417.1 63.2H425.6V59.4L434.6 65.2L425.6 70.8V67.3H417.1z" fill="#1e88e5"/>
<g fill="none" stroke="#2b2b2b" stroke-width="2.1"><rect x="-3.6" y="-2.4" width="9" height="4.8" rx="2.4" transform="translate(437.5 85.6) rotate(-33)"/><rect x="-3.6" y="-2.4" width="9" height="4.8" rx="2.4" transform="translate(442.5 82.3) rotate(-33)"/></g>
<!-- 11 new component -->
<path d="M460.3 77.7H472.5V90.2H460.3z" fill="#d6d6d6" stroke="#555" stroke-width="1"/>
<path d="M472.5 77.7H484L487.6 74.6V86.8L484 90.2H472.5z" fill="#dadada" stroke="#555" stroke-width="1"/>
<path d="M484 78V90.2" stroke="#c0c0c0" stroke-width="0.8"/>
<path d="M460.7 66.7H472.5V77.7H460.7z" fill="#5aa5e3"/>
<path d="M460.7 66.7L465.2 63.1H476.1L472.5 66.7z" fill="#90c9f5"/>
<path d="M472.5 66.7L476.1 63.1V74.1L472.5 77.7z" fill="#3f8ad0"/>
<path d="M482 59.1h4v5.6h5.9v4h-5.9v5.7h-4v-5.7h-5.9v-4h5.9z" fill="#1fa84a"/>
<!-- 12 joint -->
<rect x="503.6" y="77.5" width="13.2" height="10.9" fill="#f6f6f6" stroke="#555" stroke-width="1.1"/>
<rect x="520.2" y="61.3" width="13.6" height="11.2" fill="#5aa5e3"/>
<path d="M518.6 61.3V88.6" stroke="#e0262a" stroke-width="1.1"/>
<!-- 13 configure -->
<path d="M560.3 66.2L567 59.5H587.6V86.8H560.3z" fill="#e3e3e3" stroke="#cfcfcf" stroke-width="0.9"/>
<g stroke="#b4b4b4" stroke-width="1.5"><path d="M578.5 81.9H591.9 M578.5 87.7H591.9"/><path d="M588.2 85V90.5" stroke="#a8a8a8" stroke-width="1.8"/><path d="M581.8 79V85" stroke="#9ccbf2" stroke-width="1.8"/><path d="M585 76V80 M588 74.5V79" stroke="#cfcfcf" stroke-width="0.8"/></g>
<circle cx="584" cy="66.7" r="7.9" fill="#1e88e5"/>
<path d="M584 61L588.2 66.2H585.9C585.9 69 584.6 71.5 582 72.6C582.8 70.5 582.6 68 582.4 66.2H579.9z" fill="#fff"/>
<!-- 14 configure table -->
<rect x="603.4" y="59.5" width="29.8" height="27.9" fill="#f4f4f4" stroke="#b9b9b9" stroke-width="1"/>
<rect x="603.9" y="60" width="28.8" height="3.9" fill="#c9c9c9"/>
<path d="M606 67.5H630 M606 73H630 M606 78.5H630 M606 84H622 M606.5 67.5V84 M612 67.5V84 M617.5 67.5V84 M623 67.5V80" stroke="#bdbdbd" stroke-width="0.9" fill="none"/>
<g stroke="#b4b4b4" stroke-width="1.5"><path d="M621.6 81.9H635 M621.6 87.7H635"/><path d="M631.3 85V90.5" stroke="#a8a8a8" stroke-width="1.8"/><path d="M624.9 79V85" stroke="#9ccbf2" stroke-width="1.8"/></g>
<circle cx="627.1" cy="66.7" r="7.9" fill="#1e88e5"/>
<path d="M627.1 61L631.3 66.2H629C629 69 627.7 71.5 625.1 72.6C625.9 70.5 625.7 68 625.5 66.2H623z" fill="#fff"/>
<!-- 15 construct -->
<path d="M687.1 69.1L696 59.4H703.5L696 69.1z" fill="#f0f0f0" stroke="#555" stroke-width="1"/>
<path d="M687.1 69.1H696V89.6H687.1z" fill="#dcdcdc" stroke="#555" stroke-width="1"/>
<path d="M696.6 68.3L704.5 59.9V81.7L696.6 89.6z" fill="#55b46a"/>
<path d="M708.3 68.3L716.7 59.9V80.9L708.3 89.3z" fill="#e08f58"/>
<!-- 16 measure -->
<rect x="767.1" y="77.5" width="27.6" height="5.1" fill="#f5a623"/>
<path d="M770 77.5v2 M773.4 77.5v2.8 M776.8 77.5v2 M780.2 77.5v2.8 M783.6 77.5v2 M787 77.5v2.8 M790.4 77.5v2" stroke="#b87708" stroke-width="0.9"/>
<path d="M767.5 67.1V75.8 M794.4 67.1V75.8 M770 71.3H792" stroke="#555" stroke-width="1.1" fill="none"/>
<path d="M768.2 71.3L772.2 69.2V73.4z M793.7 71.3L789.7 69.2V73.4z" fill="#555"/>
<!-- 17 interference -->
<rect x="813.9" y="63.9" width="10.2" height="10.3" fill="#acd2f1" stroke="#2b8ae0" stroke-width="1"/>
<rect x="813.9" y="74.2" width="10.2" height="10.4" fill="#acd2f1" stroke="#2b8ae0" stroke-width="1"/>
<path d="M824.6 63.9H836.7V85H824.6 M824.6 74.4H836.7" fill="none" stroke="#8c8c8c" stroke-width="1"/>
<path d="M824.3 59.9V88.6" stroke="#2b8ae0" stroke-width="1.2"/>
<path d="M817 60.7H810.6V66 M810.6 82.5V88.2H817" fill="none" stroke="#2b8ae0" stroke-width="1.2"/>
<!-- 18 insert derive -->
<path d="M866.9 68.4L874.8 61.2H892.9V79.8L886.1 87H866.9z" fill="url(#gwc)" stroke="#555" stroke-width="1"/>
<path d="M866.9 68.4H886.1V87 M886.1 68.4L892.9 61.2" fill="none" stroke="#cfcfcf" stroke-width="0.7"/>
<path d="M863.4 80.9C865 76.5 868.5 75.3 872.3 75.3V72.2L879 76.8L872.3 81.6V78.6C869 78.4 866 79 863.4 80.9z" fill="#2b2b2b"/>
<!-- 19 insert image -->
<rect x="906.1" y="60.2" width="28.5" height="28.5" fill="#6fb8f0"/>
<path d="M906.1 80L914.5 71.5L921 78.5L926.5 74.5L934.6 82V88.7H906.1z" fill="#3d8fd2"/>
<circle cx="926.8" cy="68" r="3" fill="#fdf6b8"/>
<!-- 20 insert mesh -->
<path d="M952.5 70L957 64.5H973.5L980 70V84L973.5 89L962 90.7L954 86z" fill="#d9b65c"/>
<path d="M952.5 70H980 M954 77.5H980 M954 86L962 84.5L973.5 83.5L980 84 M962 70V90.7 M973.5 70V89 M957 64.5L962 70L973.5 64.5 M954 70L962 77.5L973.5 70L980 77.5 M954 77.5L962 84.5L973.5 77.5 M962 84.5L973.5 83.5" fill="none" stroke="#a9893a" stroke-width="0.8"/>
<path d="M948 62.3H957.5V59.6L965.8 64.2L957.5 68.8V66.1H948z" fill="#1e88e5"/>
<!-- 21 select -->
<rect x="1014" y="59.6" width="27.9" height="20.8" fill="none" stroke="#22b14c" stroke-width="1.2" stroke-dasharray="3.2 2"/>
<path d="M1035.8 73.8V87.2L1038.8 84.4L1041.2 90L1043.4 89L1041 83.6H1045.2z" fill="#fff" stroke="#222" stroke-width="1.1" stroke-linejoin="round"/>
</svg>

<!-- toolbar tabs -->
<div class="t" style="left:20.73px;top:36.82px;font-size:12.50px;color:#3e3e3e;transform:scaleX(0.9397);">SOLID</div>
<div class="abs" style="left:9px;top:54px;width:60px;height:3px;background:#333"></div>
<div class="t" style="left:103.77px;top:36.82px;font-size:12.50px;color:#3e3e3e;transform:scaleX(0.8671);">SURFACE</div>
<div class="t" style="left:201.77px;top:36.82px;font-size:12.50px;color:#3e3e3e;transform:scaleX(0.9314);">MESH</div>
<div class="t" style="left:279.55px;top:36.82px;font-size:12.50px;color:#3e3e3e;transform:scaleX(0.8990);">SHEET METAL</div>
<div class="t" style="left:402.79px;top:36.82px;font-size:12.50px;color:#3e3e3e;transform:scaleX(0.9064);">PLASTIC</div>
<div class="t" style="left:495.58px;top:36.82px;font-size:12.50px;color:#3e3e3e;transform:scaleX(0.9175);">MANAGE</div>
<div class="t" style="left:588.34px;top:36.82px;font-size:12.50px;color:#3e3e3e;transform:scaleX(0.9789);">UTILITIES</div>

<!-- group labels -->
<div class="t" style="left:81.28px;top:97.72px;font-size:12.50px;color:#454545;transform:scaleX(0.8287);">CREATE</div><div class="dd" style="left:125px;top:101px"></div>
<div class="t" style="left:284.28px;top:97.72px;font-size:12.50px;color:#454545;transform:scaleX(0.9224);">MODIFY</div><div class="dd" style="left:332.5px;top:101px"></div>
<div class="t" style="left:438.50px;top:97.72px;font-size:12.50px;color:#454545;transform:scaleX(0.8897);">ASSEMBLE</div><div class="dd" style="left:501px;top:101px"></div>
<div class="t" style="left:559.65px;top:97.72px;font-size:12.50px;color:#454545;transform:scaleX(0.8866);">CONFIGURE</div><div class="dd" style="left:628.5px;top:101px"></div>
<div class="t" style="left:663.87px;top:97.72px;font-size:12.50px;color:#454545;transform:scaleX(0.8490);">CONSTRUCT</div><div class="dd" style="left:733px;top:101px"></div>
<div class="t" style="left:771.48px;top:97.72px;font-size:12.50px;color:#454545;transform:scaleX(0.9081);">INSPECT</div><div class="dd" style="left:823.5px;top:101px"></div>
<div class="t" style="left:892.26px;top:97.72px;font-size:12.50px;color:#454545;transform:scaleX(0.9288);">INSERT</div><div class="dd" style="left:937.5px;top:101px"></div>
<div class="t" style="left:1004.98px;top:97.72px;font-size:12.50px;color:#454545;transform:scaleX(0.8334);">SELECT</div><div class="dd" style="left:1048.5px;top:101px"></div>

<div class="sep" style="left:222px"></div>
<div class="sep" style="left:404.5px"></div>
<div class="sep" style="left:545px"></div>
<div class="sep" style="left:649px"></div>
<div class="sep" style="left:752.5px"></div>
<div class="sep" style="left:849.5px"></div>
<div class="sep" style="left:989.5px"></div>

<!-- title -->
<div class="t" style="left:382.12px;top:12.29px;font-size:12.30px;color:#2c3447;transform:scaleX(0.9806);">PiegeFrelon-TO82 v16*</div>
<div class="t" style="left:931.23px;top:10.14px;font-size:12.00px;color:#4a4a4a;transform:scaleX(0.9905);">1</div>
<div class="abs" style="left:1034px;top:3px;width:26px;height:26px;border-radius:13px;background:#fff"></div>
<div class="t" style="left:1037.61px;top:10.14px;font-size:12.00px;color:#3a3a3a;transform:scaleX(0.9008);">DD</div>

<!-- browser -->
<div class="abs" style="left:-1px;top:121px;width:176px;height:25px;background:#f3f3f3;border:1px solid #dedede"></div>
<div class="abs" style="left:154px;top:132px;width:8px;height:2px;background:#555"></div>
<div class="lbl" style="top:151px;width:132px;background:#f1f1f1"></div>
<div class="lbl" style="top:151px;width:107px;background:#d6d6d6"></div>
<div class="t" style="right:972.90px;top:153.84px;font-size:13.30px;color:#333;font-weight:bold;transform-origin:100% 50%;transform:scaleX(0.8938);">PiegeFrelon-TO82 v16</div>
<svg class="abs" style="left:110px;top:154px" width="15" height="15" viewBox="0 0 15 15"><circle cx="7.5" cy="7.4" r="5.6" fill="none" stroke="#333" stroke-width="1.3"/><circle cx="7.5" cy="7.4" r="2.3" fill="#333"/></svg>
<div class="lbl" style="top:175px;width:82.5px"></div>
<div class="t" style="right:1000.99px;top:177.77px;font-size:13.50px;color:#3c3c3c;transform-origin:100% 50%;transform:scaleX(0.9748);">Document Settings</div>
<div class="lbl" style="top:199px;width:50.8px"></div>
<div class="t" style="right:1033.05px;top:201.77px;font-size:13.50px;color:#3c3c3c;transform-origin:100% 50%;transform:scaleX(0.8961);">Named Views</div>
<div class="lbl" style="top:223px;width:31.8px"></div>
<div class="t" style="right:1049.39px;top:225.87px;font-size:13.50px;color:#3c3c3c;transform-origin:100% 50%;transform:scaleX(0.9300);">Origin</div>
<div class="lbl" style="top:247px;width:43.5px"></div>
<div class="t" style="right:1037.33px;top:249.87px;font-size:13.50px;color:#3c3c3c;transform-origin:100% 50%;transform:scaleX(0.9300);">Analysis</div>
<div class="lbl" style="top:271px;width:35.5px"></div>
<div class="t" style="right:1045.43px;top:273.87px;font-size:13.50px;color:#3c3c3c;transform-origin:100% 50%;transform:scaleX(0.9300);">Bodies</div>
<div class="lbl" style="top:295px;width:47.6px"></div>
<div class="t" style="right:1033.63px;top:297.87px;font-size:13.50px;color:#3c3c3c;transform-origin:100% 50%;transform:scaleX(0.9300);">Sketches</div>
<div class="lbl" style="top:319px;width:71.8px"></div>
<div class="t" style="right:1010.97px;top:321.87px;font-size:13.50px;color:#3c3c3c;transform-origin:100% 50%;transform:scaleX(0.9300);">Construction</div>

<!-- bottom left -->
<div class="abs" style="left:0;top:600.5px;width:175px;height:22px;background:#f4f4f4"></div>
<div class="abs" style="left:153.8px;top:612px;width:8px;height:2px;background:#666"></div>
<div class="abs" style="left:156.8px;top:609px;width:2px;height:8px;background:#666"></div>
<!-- nav bar -->
<div class="abs" style="left:352px;top:600.5px;width:239px;height:22px;background:#f3f3f3"></div>

<svg class="abs" style="left:345px;top:594px" width="255" height="28" viewBox="345 594 255 28">
<!-- orbit -->
<ellipse cx="362.9" cy="611.3" rx="6.9" ry="3.3" fill="none" stroke="#333" stroke-width="1.2"/>
<path d="M365.5 613L368.8 614.8L366 616.5z" fill="#333"/>
<path d="M362.9 602.5V619.8" stroke="#2b9cf0" stroke-width="1.3" stroke-dasharray="3 1.4"/>
<path d="M377.1 609.6H383.3L380.2 613.2z" fill="#666"/>
<!-- look at -->
<path d="M391.5 607.5L394.5 604.8L402 605.5V607.5" fill="none" stroke="#444" stroke-width="1"/>
<rect x="390.7" y="607.7" width="13.6" height="10.8" fill="#5aa5e3" stroke="#3a3a3a" stroke-width="1"/>
<path d="M391.5 609.8H403.5" stroke="#3a3a3a" stroke-width="0.8"/>
<!-- hand -->
<path d="M419.5 619.5C417.5 616.5 416 613.5 415.5 611.5C416.5 610.5 418 611.5 419 613.5L418.2 606C418.8 604.8 420.3 605 420.6 606.2L421.5 610.5L421.7 604.2C422.3 603 423.8 603.1 424.1 604.3L424.3 610.3L425.6 604.9C426.3 603.9 427.6 604.2 427.8 605.3L427.2 611L429.3 607.3C430.1 606.6 431.3 607.1 431.2 608.2C430.2 611.5 429.3 615.5 426.8 619.5z" fill="#fbfbfb" stroke="#8a8a8a" stroke-width="0.9" stroke-linejoin="round"/>
<!-- zoom -->
<circle cx="446.2" cy="611.2" r="4" fill="#e6e6e6" stroke="#555" stroke-width="1.1"/>
<path d="M449.2 614.3L453.2 618" stroke="#9a6a35" stroke-width="1.8"/>
<path d="M452.5 605.5H457.5 M455 603V608 M452.5 609.6H457.5" stroke="#444" stroke-width="1" fill="none"/>
<!-- zoom window -->
<rect x="467.3" y="603.7" width="16.3" height="15.2" fill="none" stroke="#333" stroke-width="1" stroke-dasharray="2.2 1.3"/>
<circle cx="474.8" cy="610.7" r="6.3" fill="#d2d2d2" stroke="#666" stroke-width="1"/>
<path d="M479.5 615.3L483.5 619" stroke="#9a6a35" stroke-width="1.8"/>
<path d="M488.8 609.6H495L491.9 613.2z" fill="#666"/>
<!-- display -->
<rect x="501.3" y="605.6" width="15.4" height="10.6" fill="#f4f4f4" stroke="#555" stroke-width="1.1"/>
<rect x="503" y="607.3" width="12" height="7.2" fill="#a9a9a9"/>
<path d="M509 616.5V618.3 M505 618.8H513" stroke="#555" stroke-width="1.2"/>
<path d="M520 609.6H526.2L523.1 613.2z" fill="#666"/>
<!-- grid -->
<path d="M532.8 603.8H545.4V616.4H532.8z M537 603.8V616.4 M541.2 603.8V616.4 M532.8 608H545.4 M532.8 612.2H545.4" fill="none" stroke="#555" stroke-width="1"/>
<path d="M550.7 609.6H556.9L553.8 613.2z" fill="#666"/>
<!-- viewports -->
<rect x="563.5" y="604.9" width="15.2" height="12.8" fill="#ededed" stroke="#666" stroke-width="1.1"/>
<path d="M571.1 604.9V617.7 M563.5 611.3H578.7" stroke="#666" stroke-width="1.1"/>
<path d="M565.7 607H569V609.3H565.7z M573.2 607H576.5V609.3H573.2z M565.7 613.3H569V615.6H565.7z M573.2 613.3H576.5V615.6H573.2z" fill="none" stroke="#999" stroke-width="0.7"/>
<path d="M581.9 609.6H588.1L585 613.2z" fill="#666"/>
</svg>

<svg class="abs" style="left:980px;top:125px" width="91" height="80" viewBox="980 125 91 80">
<defs><filter id="vb" x="-20%" y="-20%" width="140%" height="140%"><feGaussianBlur stdDeviation="0.5"/></filter><filter id="vs" x="-30%" y="-60%" width="160%" height="250%"><feGaussianBlur stdDeviation="2.5"/></filter></defs>
<rect x="1006" y="184" width="42" height="7" fill="#bdbdbd" opacity="0.55" filter="url(#vs)"/>
<g filter="url(#vb)">
<path d="M1004.3 152.5L1011.1 141.3L1042.2 142.5V152.5z" fill="#f1f1f1"/>
<path d="M1004.3 152.5H1042.2V186.9H1004.3z" fill="#e9e9e9"/>
<rect x="1012.3" y="160.3" width="21.8" height="18.8" fill="#eeeeee"/>
<path d="M1011.5 141.4L1041.5 142.4 M1004.5 152.5H1042 M1004.4 153V184 M1004.5 152L1011 141.5" fill="none" stroke="#7a7a7a" stroke-width="0.9" stroke-dasharray="3.6 1.8"/>
<path d="M1042.8 146.5V187.6" stroke="#615ce6" stroke-width="2.1"/>
<path d="M999.6 186.9H1043" stroke="#74dc74" stroke-width="2.1"/>
<text x="1015" y="173.6" font-family="'Liberation Sans',sans-serif" font-size="8.6" fill="#7a7a7a" textLength="16.2" lengthAdjust="spacingAndGlyphs">LEFT</text>
<text x="1020.5" y="149.5" font-family="'Liberation Sans',sans-serif" font-size="5" fill="#9a9a9a" transform="translate(1026 147) scale(1 0.5) translate(-1026 -147)">TOP</text>
<text x="1041" y="144.6" font-family="'Liberation Sans',sans-serif" font-size="10" font-weight="bold" fill="#6a66ec">Z</text>
<text x="992.6" y="187.6" font-family="'Liberation Sans',sans-serif" font-size="8" font-weight="bold" fill="#7ddc7d">Y</text>
</g>
</svg>
<!-- spinner -->
<svg class="abs" style="left:480px;top:302px" width="28" height="40" viewBox="480 302 28 40">
<rect x="485.5" y="307.3" width="17.1" height="29.6" rx="7.5" fill="#e9e9e9" stroke="#161616" stroke-width="2.4"/>
<path d="M485.5 322.4H502.6" stroke="#161616" stroke-width="1.6"/>
<path d="M494 311L498.2 317.8H489.8z M494 333.8L498.2 327.1H489.8z" fill="#161616"/>
</svg>
<!-- arrow cursor -->
<svg class="abs" style="left:456px;top:342px" width="30" height="20" viewBox="456 342 30 20">
<path d="M481 345.9H466.2L461.6 356.8L468 354.2L471.8 358.2L477 355.2L475 351z" fill="none" stroke="#3c4650" stroke-opacity="0.45" stroke-width="2.6" stroke-linejoin="round"/><path d="M481 345.9H466.2L461.6 356.8L468 354.2L471.8 358.2L477 355.2L475 351z" fill="#1e96de" stroke="#fff" stroke-width="1.3" stroke-linejoin="round"/>
</svg>

<!-- panel -->
<div id="panel"></div>
<div class="abs" style="left:629.5px;top:219px;width:8px;height:2px;background:#555"></div>
<div class="t" style="left:644.69px;top:214.59px;font-size:12.30px;color:#444;transform:scaleX(0.9095);">EDIT FEATURE</div>
<div class="abs" style="left:618px;top:232px;width:448px;height:1px;background:#e0e0e0"></div>
<div class="t" style="left:630.77px;top:241.20px;font-size:13.00px;color:#3a3a3a;transform:scaleX(0.9127);">Type</div>
<div class="field" style="left:768px;top:235px;width:265.5px"></div>
<div class="t" style="left:790.99px;top:241.20px;font-size:13.00px;color:#3a3a3a;transform:scaleX(1.0113);">Fillet</div>
<div class="dd" style="left:1022.5px;top:246px;border-top-color:#6e6e6e"></div>
<div class="abs" style="left:627px;top:268px;width:407px;height:111.5px;background:#fff;border:1px solid #e9e9e9"></div>
<div class="abs" style="left:628px;top:268px;width:405.5px;height:27px;background:#dbedf8"></div>
<div class="t" style="left:631.21px;top:274.60px;font-size:13.00px;color:#333;transform:scaleX(0.9003);">1 Edge</div>
<div class="abs" style="left:740.5px;top:270.5px;width:62.5px;height:22.5px;background:#fff"></div>
<div class="t" style="left:743.22px;top:274.60px;font-size:13.00px;color:#333;transform:scaleX(0.9584);">0.20 mm</div>
<div class="abs" style="left:829.5px;top:270.5px;width:62.7px;height:22.5px;background:#fff"></div>
<div class="t" style="left:832.42px;top:274.60px;font-size:13.00px;color:#b9b9b9;transform:scaleX(0.9523);">0.20 mm</div>
<div class="t" style="left:940.79px;top:274.80px;font-size:13.00px;color:#333;transform:scaleX(0.9700);">Curvature (...</div>
<!-- plus / x -->
<div class="abs" style="left:636px;top:364.3px;width:12px;height:1.6px;background:#555"></div>
<div class="abs" style="left:641.2px;top:359px;width:1.6px;height:12px;background:#555"></div>
<svg class="abs" style="left:662px;top:359px" width="12" height="12" viewBox="0 0 12 12"><path d="M2 2 L10 10 M10 2 L2 10" stroke="#555" stroke-width="1.7" fill="none"/></svg>

<div class="field" style="left:768px;top:387.5px;width:265.5px;height:25.5px"></div>
<div class="t" style="left:791.10px;top:393.20px;font-size:13.00px;color:#3a3a3a;transform:scaleX(0.9577);">Constant</div>
<div class="dd" style="left:1022.5px;top:398px;border-top-color:#6e6e6e"></div>
<svg class="abs" style="left:728px;top:388px" width="6" height="15" viewBox="0 0 6 15"><circle cx="3.2" cy="2.4" r="1.1" fill="#8c8c8c"/><circle cx="3.2" cy="7.4" r="1.1" fill="#8c8c8c"/><circle cx="3.2" cy="12.4" r="1.1" fill="#8c8c8c"/></svg>
<div class="t" style="left:629.45px;top:422.90px;font-size:13.00px;color:#3a3a3a;transform:scaleX(0.9507);">Edges/Faces/Features</div>
<div class="abs" style="left:767.8px;top:416.8px;width:62.4px;height:26.4px;background:#d6e9f6;border:1.5px solid #55ace6;border-radius:2px"></div>
<div class="t" style="left:788.72px;top:423.00px;font-size:13.00px;color:#333;transform:scaleX(0.9572);">Select</div>
<div class="t" style="left:630.16px;top:452.90px;font-size:13.00px;color:#3a3a3a;transform:scaleX(0.9581);">Tangent Chain</div>
<div class="abs" style="left:773.2px;top:454px;width:12.3px;height:12.2px;background:#707070;border-radius:1px"></div>
<svg class="abs" style="left:773.2px;top:454px" width="12.3" height="12.2" viewBox="0 0 12.3 12.2"><path d="M2.8 6.3 L5.2 8.6 L9.6 3.6" stroke="#fff" stroke-width="1.8" fill="none"/></svg>
<div class="t" style="left:629.86px;top:483.00px;font-size:13.00px;color:#3a3a3a;transform:scaleX(0.9652);">Tangency Weight</div>
<div class="field" style="left:767.7px;top:477.2px;width:265.8px;height:25.6px"></div>
<div class="t" style="left:770.09px;top:483.00px;font-size:13.00px;color:#333;transform:scaleX(0.9217);">1</div>
<div class="abs" style="left:618px;top:509.5px;width:435px;height:1px;background:#dedede"></div>
<div class="t" style="left:629.50px;top:523.30px;font-size:13.00px;color:#3a3a3a;transform:scaleX(0.9552);">Corner Type</div>
<div class="field" style="left:767.7px;top:517.7px;width:265.8px;height:25.6px"></div>
<div class="t" style="left:790.70px;top:523.30px;font-size:13.00px;color:#3a3a3a;transform:scaleX(1.0040);">Rolling Ball</div>
<div class="dd" style="left:1022.5px;top:528px;border-top-color:#6e6e6e"></div>
<div class="abs" style="left:618px;top:545.7px;width:448px;height:1px;background:#e2e2e2"></div>
<svg class="abs" style="left:625px;top:558px" width="15" height="15" viewBox="0 0 15 15"><circle cx="7.2" cy="7.2" r="6.9" fill="#868686"/><rect x="6.3" y="6.2" width="1.9" height="5" fill="#fff"/><circle cx="7.25" cy="3.9" r="1.15" fill="#fff"/></svg>
<div class="btn" style="left:933.3px;top:553.3px;width:42.4px;height:23.4px"></div>
<div class="t" style="left:946.27px;top:557.70px;font-size:13.00px;color:#333;transform:scaleX(0.8603);">OK</div>
<div class="btn" style="left:990.2px;top:553.3px;width:62.4px;height:23.4px"></div>
<div class="t" style="left:1002.52px;top:557.70px;font-size:13.00px;color:#333;transform:scaleX(0.9227);">Cancel</div>

<svg class="abs" style="left:617px;top:208px" width="450" height="375" viewBox="617 208 450 375">
<defs><linearGradient id="gcv" x1="0" y1="0" x2="1" y2="1"><stop offset="0" stop-color="#2f6fb3"/><stop offset="1" stop-color="#8fc0ea"/></linearGradient></defs>
<!-- fillet icons -->
<g transform="translate(771.2 239.9) scale(0.494) translate(-277.2 -59.5)">
<path d="M277.2 90.4V66.2L284.5 59.5H293C301 60 307.5 65 308.8 73.5V82.6L301.5 90.4z" fill="#dedede"/>
<path d="M301.5 90.4L308.8 82.6V73.5L302.7 77.7z" fill="#c2c2c2"/>
<path d="M289.3 64.9L295.4 59.1C303 60.5 308 66 308.8 72.2L302.7 77.7C302 71.5 297 66 289.3 64.9z" fill="#5aa6e3"/>
<path d="M277.2 90.4V66.2L284.5 59.5H293 M277.2 90.4H301.5L308.8 82.6V74" fill="none" stroke="#555" stroke-width="2"/>
</g>
<g transform="translate(723.9 274.1) scale(0.494) translate(-277.2 -59.5)">
<path d="M277.2 90.4V66.2L284.5 59.5H293C301 60 307.5 65 308.8 73.5V82.6L301.5 90.4z" fill="#dedede"/>
<path d="M301.5 90.4L308.8 82.6V73.5L302.7 77.7z" fill="#c2c2c2"/>
<path d="M289.3 64.9L295.4 59.1C303 60.5 308 66 308.8 72.2L302.7 77.7C302 71.5 297 66 289.3 64.9z" fill="#5aa6e3"/>
<path d="M277.2 90.4V66.2L284.5 59.5H293 M277.2 90.4H301.5L308.8 82.6V74" fill="none" stroke="#555" stroke-width="2"/>
</g>
<g transform="translate(770.8 391.9) scale(0.494) translate(-277.2 -59.5)">
<path d="M277.2 90.4V66.2L284.5 59.5H293C301 60 307.5 65 308.8 73.5V82.6L301.5 90.4z" fill="#dedede"/>
<path d="M301.5 90.4L308.8 82.6V73.5L302.7 77.7z" fill="#c2c2c2"/>
<path d="M289.3 64.9L295.4 59.1C303 60.5 308 66 308.8 72.2L302.7 77.7C302 71.5 297 66 289.3 64.9z" fill="#5aa6e3"/>
<path d="M277.2 90.4V66.2L284.5 59.5H293 M277.2 90.4H301.5L308.8 82.6V74" fill="none" stroke="#555" stroke-width="2"/>
</g>
<!-- curvature icon -->
<path d="M921.5 278.4L926.2 279.3V284.8L921.5 289.3z" fill="#f2f2f2" stroke="#222" stroke-width="1"/>
<path d="M921.7 274.6L927.3 274.2C932 276 936 281 936.6 284.6L931.8 288.5C931 284.5 927.5 280.5 923 278.4z" fill="url(#gcv)" stroke="#1b4a80" stroke-width="0.9" stroke-dasharray="1.6 1"/>
<!-- select cursor -->
<path d="M775.6 422.6V434.8L778.4 432.4L780.4 436.9L782.2 436.1L780.2 431.6H784.2z" fill="#fff" stroke="#555" stroke-width="0.9" stroke-linejoin="round"/>
<!-- rolling ball -->
<rect x="771.6" y="530.2" width="7.2" height="7.4" fill="#d9d9d9"/>
<path d="M771.6 530.2V537.6H778.8" fill="none" stroke="#444" stroke-width="1"/>
<path d="M771.2 528.9L773.6 525.9H781.4L786.7 522V525.6L783.7 528.8V534.8L780.5 537.7V529.2H771.2z" fill="#4f9fe0"/>
<path d="M774.8 522.6H781 M786 528.5V534" stroke="#555" stroke-width="1" stroke-dasharray="3.2 1.2" fill="none"/>
<!-- expand >> -->
<path d="M1052.8 218V223.4L1056 220.7z M1057 218V223.4L1060.2 220.7z" fill="#b2b2b2"/>
</svg>

<!-- floating input -->
<div class="abs" style="left:587px;top:385.3px;width:131.6px;height:20.8px;background:#fff"></div>
<div class="abs" style="left:587px;top:385.3px;width:14px;height:20.8px;background:#f2f2f2"></div>
<svg class="abs" style="left:587px;top:385px" width="14" height="21" viewBox="0 0 14 21"><path d="M6.5 3V18 M9 3V18" stroke="#d6d6d6" stroke-width="1.2" stroke-dasharray="1.2 1.6"/></svg>
<div class="abs" style="left:601px;top:404.4px;width:117.6px;height:1.6px;background:#2f8fdc"></div>
<div class="abs" style="left:635px;top:387.3px;width:49px;height:16.2px;background:#a9d2f1"></div>
<div class="t" style="left:635.52px;top:388.70px;font-size:13.00px;color:#2a2a2a;transform:scaleX(0.9503);">0.20 mm</div>

<!-- match radius tooltip -->
<div class="abs" style="left:378px;top:360px;width:104.8px;height:17.2px;background:#f6f6f6"></div>
<div class="t" style="left:381.75px;top:362.79px;font-size:12.30px;color:#333;transform:scaleX(0.9491);">Match Radius : 0.2</div>

<div class="t" style="left:1027.48px;top:607.03px;font-size:13.20px;color:#303030;transform:scaleX(0.9186);">Edge</div>
</body>
</html>
